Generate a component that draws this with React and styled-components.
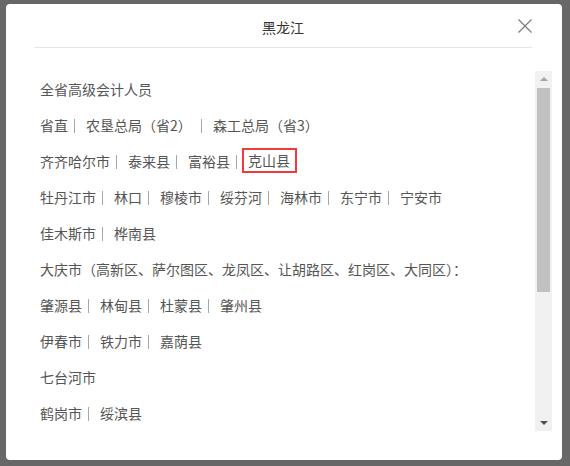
import React from 'react';
import styled, { createGlobalStyle } from 'styled-components';

const GlobalStyle = createGlobalStyle`
  html, body {
    margin: 0;
    padding: 0;
    background: #676767;
    font-family: "Noto Sans CJK SC", "Noto Sans", sans-serif;
  }
`;

const Page = styled.div`
  box-sizing: border-box;
  height: 466px;
  padding: 4px 0 0 6px;
`;

const Modal = styled.div`
  box-sizing: border-box;
  width: 556px;
  height: 456px;
  background: #fff;
  border-radius: 4px;
  display: flex;
  flex-direction: column;
  padding: 0 10px 28px 28px;
`;

const Header = styled.div`
  height: 44px;
  margin-right: 20px;
  border-bottom: 1px solid #e6e6e6;
  display: grid;
  grid-template-columns: 1fr auto 1fr;
  align-items: center;
  padding-top: 2px;
  box-sizing: border-box;
`;

const Title = styled.div`
  grid-column: 2;
  font-size: 14px;
  color: #333;
  line-height: 20px;
`;

const CloseButton = styled.button`
  grid-column: 3;
  justify-self: end;
  width: 14px;
  height: 14px;
  padding: 0;
  border: 0;
  background: none;
  cursor: pointer;
  display: flex;
  margin-top: -2px;
`;

const Body = styled.div`
  margin-top: 23px;
  height: 360px;
  display: flex;
`;

const List = styled.div`
  flex: 1;
  overflow: hidden;
  padding-left: 6px;
`;

const ScrollBar = styled.div`
  width: 17px;
  background: #f1f1f1;
  display: flex;
  flex-direction: column;
  flex-shrink: 0;
`;

const Arrow = styled.div`
  height: 17px;
  display: flex;
  align-items: center;
  justify-content: center;

  &::before {
    content: '';
    width: 0;
    height: 0;
    border-left: 4px solid transparent;
    border-right: 4px solid transparent;
    ${(p) =>
      p.$down
        ? `border-top: 4px solid #505050; margin-top: 1px;`
        : `border-bottom: 4px solid #a3a3a3; margin-top: -1px;`}
  }
`;

const Thumb = styled.div`
  margin: 0 2px;
  height: 204px;
  background: #c1c1c1;
`;

const TrackRest = styled.div`
  flex: 1;
`;

const Row = styled.div`
  font-size: 14px;
  line-height: 36px;
  color: #555;
  white-space: nowrap;
`;

const Item = styled.span`
  cursor: pointer;
`;

const Sep = styled.span`
  display: inline-block;
  width: 1px;
  height: 14px;
  background: #a6a6a6;
  vertical-align: -2px;
  margin: 0 ${(p) => (p.$tight ? 5 : 11)}px 0 6px;
`;

const Picked = styled.span`
  display: inline-block;
  border: 2px solid #f23a3a;
  line-height: 21px;
  padding: 0 5px 0 4px;
  vertical-align: 1px;
`;

const rows = [
  ['全省高级会计人员'],
  ['省直', '农垦总局（省2） ', '森工总局（省3）'],
  ['齐齐哈尔市', '泰来县', '富裕县', '克山县'],
  ['牡丹江市', '林口', '穆棱市', '绥芬河', '海林市', '东宁市', '宁安市'],
  ['佳木斯市', '桦南县'],
  ['大庆市（高新区、萨尔图区、龙凤区、让胡路区、红岗区、大同区）：'],
  ['肇源县', '林甸县', '杜蒙县', '肇州县'],
  ['伊春市', '铁力市', '嘉荫县'],
  ['七台河市'],
  ['鹤岗市', '绥滨县'],
  ['鸡西市', '虎林市', '密山市'],
  ['双鸭山市', '宝清县'],
  ['黑河市', '北安市', '五大连池市'],
  ['绥化市', '安达市', '肇东市', '海伦市'],
  ['大兴安岭地区'],
  ['哈尔滨市', '尚志市', '五常市'],
];

const picked = '克山县';

function CloseIcon() {
  return (
    <svg width="14" height="14" viewBox="0 0 14 14">
      <path d="M0.5 0.5 L13.5 13.5 M13.5 0.5 L0.5 13.5" stroke="#7a7a7a" strokeWidth="1.2" fill="none" />
    </svg>
  );
}

export default function App() {
  return (
    <>
      <GlobalStyle />
      <Page>
        <Modal>
          <Header>
            <Title>黑龙江</Title>
            <CloseButton aria-label="关闭">
              <CloseIcon />
            </CloseButton>
          </Header>
          <Body>
            <List>
              {rows.map((row, i) => (
                <Row key={i}>
                  {row.map((name, j) => (
                    <React.Fragment key={j}>
                      {j > 0 && <Sep $tight={name === picked} />}
                      {name === picked ? <Picked>{name}</Picked> : <Item>{name}</Item>}
                    </React.Fragment>
                  ))}
                </Row>
              ))}
            </List>
            <ScrollBar>
              <Arrow />
              <Thumb />
              <TrackRest />
              <Arrow $down />
            </ScrollBar>
          </Body>
        </Modal>
      </Page>
    </>
  );
}
